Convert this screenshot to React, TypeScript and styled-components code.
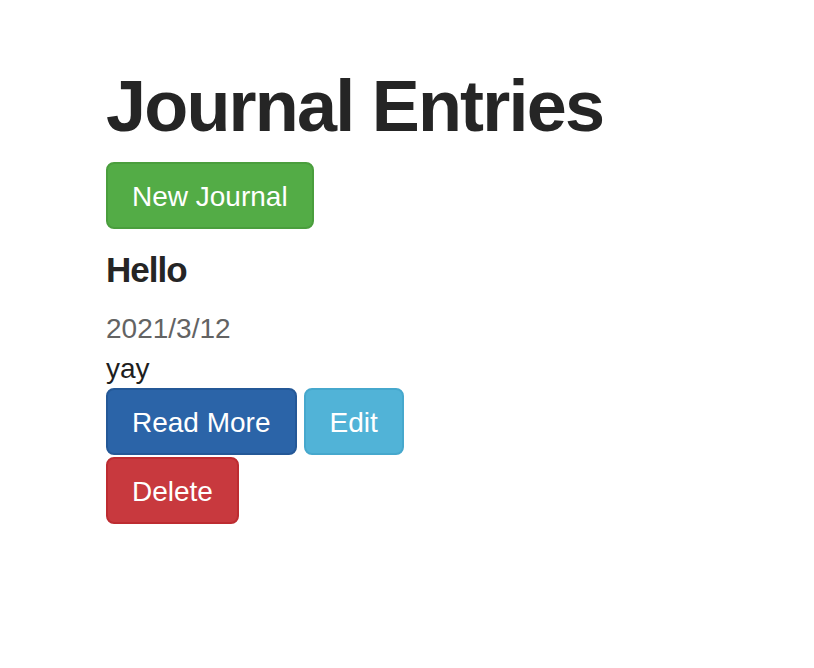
import React from "react";
import styled, { createGlobalStyle } from "styled-components";

const GlobalStyle = createGlobalStyle`
  html, body {
    margin: 0;
    padding: 0;
    background: #ffffff;
  }
  body {
    font-family: "Liberation Sans", Arial, Helvetica, sans-serif;
    color: #252525;
  }
`;

const Page = styled.main`
  padding: 66px 0 40px 106px;
`;

const Title = styled.h1`
  margin: 0;
  font-size: 72px;
  line-height: 80px;
  font-weight: 700;
  letter-spacing: -1.8px;
  color: #252525;
`;

const Toolbar = styled.div`
  display: flex;
  margin-top: 16px;
`;

type Variant = "success" | "primary" | "info" | "danger";

const palette: Record<Variant, { bg: string; border: string }> = {
  success: { bg: "#53ac46", border: "#4a9e3d" },
  primary: { bg: "#2b64a8", border: "#245897" },
  info: { bg: "#51b3d7", border: "#46a8cd" },
  danger: { bg: "#c8393e", border: "#bd2c31" },
};

const Button = styled.button<{ $variant: Variant }>`
  display: inline-block;
  box-sizing: border-box;
  height: 67px;
  padding: 13px 24px 11px;
  border: 2px solid ${(p) => palette[p.$variant].border};
  border-radius: 8px;
  background: ${(p) => palette[p.$variant].bg};
  color: #ffffff;
  font-family: "Liberation Sans", Arial, Helvetica, sans-serif;
  font-size: 28px;
  line-height: 39px;
  font-weight: 400;
  white-space: nowrap;
  cursor: pointer;
`;

const Entry = styled.article`
  margin-top: 21px;
`;

const EntryTitle = styled.h3`
  margin: 0;
  font-size: 35px;
  line-height: 40px;
  font-weight: 700;
  letter-spacing: -1px;
  color: #252525;
`;

const EntryDate = styled.p`
  margin: 19px 0 0;
  font-size: 28px;
  line-height: 40px;
  color: #636363;
`;

const EntryBody = styled.p`
  margin: 2px 0 0;
  font-size: 28px;
  line-height: 36px;
  color: #1e1e1e;
`;

const Actions = styled.div`
  display: flex;
  flex-wrap: wrap;
  gap: 2px 7px;
  max-width: 400px;
  margin-top: 1px;
`;

export default function App() {
  return (
    <>
      <GlobalStyle />
      <Page>
        <Title>Journal Entries</Title>
        <Toolbar>
          <Button $variant="success">New Journal</Button>
        </Toolbar>
        <Entry>
          <EntryTitle>Hello</EntryTitle>
          <EntryDate>2021/3/12</EntryDate>
          <EntryBody>yay</EntryBody>
          <Actions>
            <Button $variant="primary">Read More</Button>
            <Button $variant="info">Edit</Button>
            <Button $variant="danger">Delete</Button>
          </Actions>
        </Entry>
      </Page>
    </>
  );
}
